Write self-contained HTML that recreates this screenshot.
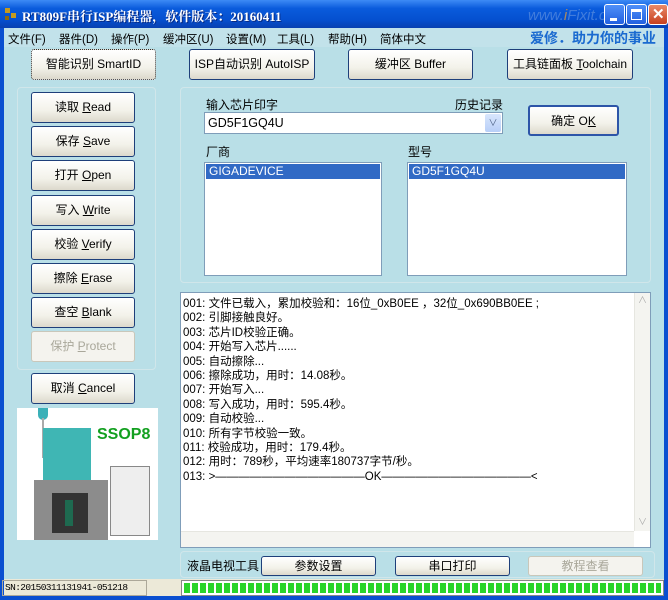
<!DOCTYPE html>
<html><head><meta charset="utf-8"><style>
*{margin:0;padding:0;box-sizing:border-box}
body{width:668px;height:600px;overflow:hidden;font-family:"Liberation Sans","Noto Sans CJK SC",sans-serif;font-size:12px;color:#000;background:#0a4fd0;position:relative}
.a{position:absolute}
#title{left:0;top:0;width:668px;height:28px;background:linear-gradient(#3d8bf5,#0a5bdc 30%,#0550d0 70%,#0840b0);}
#title .t{left:22px;top:6px;color:#fff;font-weight:bold;font-size:13px;font-family:"Liberation Serif","Noto Serif CJK SC",serif;text-shadow:1px 1px #0a2a80}
.tb{top:4px;width:21px;height:21px;border:1px solid #fff;border-radius:3px;background:linear-gradient(#4f90f8,#2260e0)}
#client{left:4px;top:28px;width:660px;height:568px;background:#b9dfe7}
#menu{left:4px;top:28px;width:660px;height:19px;background:#c2e2ea}
#menu span{position:absolute;top:3px;font-size:11.5px}
.btn{position:absolute;border:1px solid #1e3f7a;border-radius:3px;background:linear-gradient(#fff,#f3f2ea 60%,#dcd9cc);text-align:center;font-size:12px}
.btn.dis{border-color:#c9c7ba;color:#a9a79a;background:#f4f3ee}
.grp{position:absolute;border:1px solid #d0e6ea;border-radius:4px}
.lst{position:absolute;background:#fff;border:1px solid #7f9db9}
.sel{background:#316ac5;color:#fff;height:15px;line-height:15px;padding-left:3px;margin:1px}
#log div{height:14.4px;line-height:14.4px;white-space:nowrap}
</style></head><body>
<div id="title" class="a">
 <div class="a" style="left:5px;top:8px;width:5px;height:5px;background:#c49a20"></div>
 <div class="a" style="left:11px;top:13px;width:5px;height:5px;background:#c49a20"></div>
 <div class="a" style="left:5px;top:16px;width:4px;height:4px;background:#8a6a10"></div>
 <div class="a t">RT809F串行ISP编程器，软件版本：20160411</div>
 <div class="a" style="left:528px;top:7px;color:#5a8ee0;font-size:15px;font-style:italic;opacity:.7">www.<span style="color:#f0a030">i</span>Fixit.cn</div>
 <div class="a tb" style="left:604px"><div class="a" style="left:5px;top:13px;width:7px;height:3px;background:#fff"></div></div>
 <div class="a tb" style="left:626px"><div class="a" style="left:4px;top:4px;width:11px;height:11px;border:1px solid #fff;border-top-width:3px"></div></div>
 <div class="a tb" style="left:648px;background:linear-gradient(#e88a6a,#c8401e);width:20px"><div class="a" style="left:3px;top:0;color:#fff;font-weight:bold;font-size:15px">✕</div></div>
</div>
<div id="client" class="a"></div>
<div id="menu" class="a">
 <span style="left:4px">文件(F)</span><span style="left:55px">器件(D)</span><span style="left:107px">操作(P)</span><span style="left:159px">缓冲区(U)</span><span style="left:222px">设置(M)</span><span style="left:273px">工具(L)</span><span style="left:324px">帮助(H)</span><span style="left:376px">简体中文</span>
 <span style="left:526px;top:0;color:#1a6ad0;font-weight:bold;font-size:14px">爱修．助力你的事业</span>
</div>
<div class="btn" style="left:31px;top:49px;width:125px;height:31px;line-height:29px;border-style:dotted;border-color:#333">智能识别 SmartID</div>
<div class="btn" style="left:189px;top:49px;width:126px;height:31px;line-height:29px">ISP自动识别 AutoISP</div>
<div class="btn" style="left:348px;top:49px;width:125px;height:31px;line-height:29px">缓冲区 Buffer</div>
<div class="btn" style="left:507px;top:49px;width:126px;height:31px;line-height:29px">工具链面板 <u>T</u>oolchain</div>

<div class="grp" style="left:17px;top:87px;width:139px;height:283px"></div>
<div class="btn" style="left:31px;top:92px;width:104px;height:31px;line-height:29px">读取 <u>R</u>ead</div>
<div class="btn" style="left:31px;top:126px;width:104px;height:31px;line-height:29px">保存 <u>S</u>ave</div>
<div class="btn" style="left:31px;top:160px;width:104px;height:31px;line-height:29px">打开 <u>O</u>pen</div>
<div class="btn" style="left:31px;top:195px;width:104px;height:31px;line-height:29px">写入 <u>W</u>rite</div>
<div class="btn" style="left:31px;top:229px;width:104px;height:31px;line-height:29px">校验 <u>V</u>erify</div>
<div class="btn" style="left:31px;top:263px;width:104px;height:31px;line-height:29px">擦除 <u>E</u>rase</div>
<div class="btn" style="left:31px;top:297px;width:104px;height:31px;line-height:29px">查空 <u>B</u>lank</div>
<div class="btn dis" style="left:31px;top:331px;width:104px;height:31px;line-height:29px">保护 <u>P</u>rotect</div>
<div class="btn" style="left:31px;top:373px;width:104px;height:31px;line-height:29px">取消 <u>C</u>ancel</div>

<div class="a" style="left:17px;top:408px;width:141px;height:132px;background:#fff">
 <div class="a" style="left:21px;top:0;width:10px;height:12px;border-radius:0 0 5px 5px;background:#3ab0b8"></div>
 <div class="a" style="left:25px;top:10px;width:2px;height:40px;background:#aaa"></div>
 <div class="a" style="left:26px;top:20px;width:48px;height:60px;background:#3fb6b4"></div>
 <div class="a" style="left:80px;top:18px;color:#13a020;font-weight:bold;font-size:16px">SSOP8</div>
 <div class="a" style="left:17px;top:72px;width:74px;height:60px;background:#8c8c8c"></div>
 <div class="a" style="left:35px;top:85px;width:36px;height:40px;background:#333"></div>
 <div class="a" style="left:48px;top:92px;width:8px;height:26px;background:#1e6a50"></div>
 <div class="a" style="left:93px;top:58px;width:40px;height:70px;border:1px solid #888;background:#eee"></div>
</div>

<div class="grp" style="left:180px;top:87px;width:471px;height:196px"></div>
<div class="a" style="left:206px;top:96px">输入芯片印字</div>
<div class="a" style="left:455px;top:96px">历史记录</div>
<div class="lst" style="left:204px;top:112px;width:299px;height:22px;padding:3px 3px;font-size:12.5px">GD5F1GQ4U
 <div class="a" style="right:1px;top:1px;width:16px;height:18px;background:linear-gradient(#d8e6fc,#b8cff8);border-radius:2px;color:#4d6185;font-size:9px;text-align:center;line-height:18px">∨</div></div>
<div class="btn" style="left:528px;top:105px;width:91px;height:31px;line-height:29px;border-width:2px;border-color:#2d55a8">确定 O<u>K</u></div>
<div class="a" style="left:206px;top:143px">厂商</div>
<div class="a" style="left:408px;top:143px">型号</div>
<div class="lst" style="left:204px;top:162px;width:178px;height:114px"><div class="sel">GIGADEVICE</div></div>
<div class="lst" style="left:407px;top:162px;width:220px;height:114px"><div class="sel">GD5F1GQ4U</div></div>

<div class="lst" id="log" style="left:180px;top:292px;width:471px;height:256px;padding:4px 0 0 2px;font-size:11.5px">
<div>001: 文件已载入，累加校验和：16位_0xB0EE ，32位_0x690BB0EE ;</div>
<div>002: 引脚接触良好。</div>
<div>003: 芯片ID校验正确。</div>
<div>004: 开始写入芯片......</div>
<div>005: 自动擦除...</div>
<div>006: 擦除成功，用时：14.08秒。</div>
<div>007: 开始写入...</div>
<div>008: 写入成功，用时：595.4秒。</div>
<div>009: 自动校验...</div>
<div>010: 所有字节校验一致。</div>
<div>011: 校验成功，用时：179.4秒。</div>
<div>012: 用时：789秒，平均速率180737字节/秒。</div>
<div>013: &gt;—————————————OK—————————————&lt;</div>
<div class="a" style="left:453px;top:0;width:16px;height:238px;background:#f4f4f0;border-left:1px solid #e6e6e0;color:#aaa;font-size:9px;text-align:center">∧<div class="a" style="left:3px;top:222px">∨</div></div>
<div class="a" style="left:0;top:238px;width:453px;height:16px;background:#f4f4f0;border-top:1px solid #e6e6e0"></div>
</div>

<div class="grp" style="left:180px;top:551px;width:475px;height:27px"></div>
<div class="a" style="left:187px;top:557px">液晶电视工具</div>
<div class="btn" style="left:261px;top:556px;width:115px;height:20px;line-height:18px">参数设置</div>
<div class="btn" style="left:395px;top:556px;width:115px;height:20px;line-height:18px">串口打印</div>
<div class="btn dis" style="left:528px;top:556px;width:115px;height:20px;line-height:18px">教程查看</div>

<div class="a" style="left:4px;top:579px;width:660px;height:17px;background:#ece9d8"></div>
<div class="a" style="left:2px;top:580px;width:145px;height:16px;border:1px solid #aca899;font-family:'Liberation Mono',monospace;font-size:9.5px;letter-spacing:-0.6px;line-height:14px;padding-left:2px;white-space:nowrap;overflow:hidden">SN:20150311131941-051218</div>
<div class="a" style="left:181px;top:580px;width:483px;height:16px;border:1px solid #888;background:#fff;padding:2px">
 <div style="width:100%;height:100%;background:repeating-linear-gradient(90deg,#2ad42a 0 6px,#fff 6px 8px)"></div></div>
</body></html>
